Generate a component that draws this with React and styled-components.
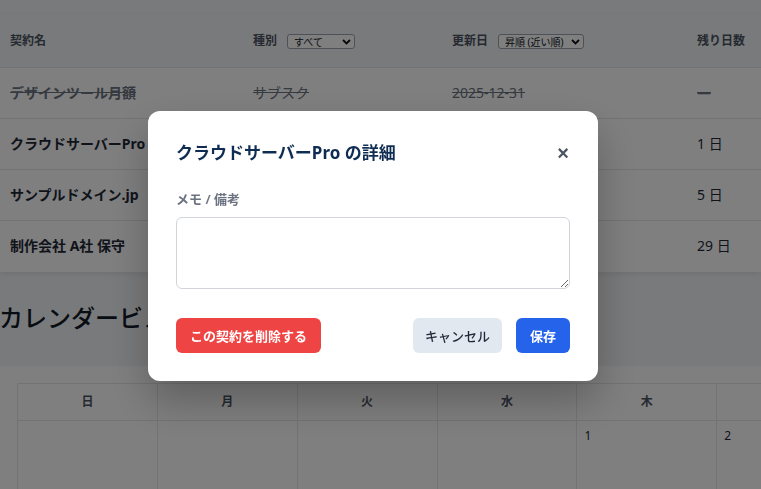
import styled, { createGlobalStyle } from "styled-components";

const GlobalStyle = createGlobalStyle`
  html, body {
    margin: 0;
    padding: 0;
    background: #f3f4f6;
    overflow: hidden;
    font-family: "Noto Sans", "Noto Sans CJK JP", sans-serif;
    color: #1f2937;
  }
`;

const contracts = [
  { name: "デザインツール月額", type: "サブスク", date: "2025-12-31", left: "—", done: true },
  { name: "クラウドサーバーPro", type: "サーバー", date: "2026-01-02", left: "1 日" },
  { name: "サンプルドメイン.jp", type: "ドメイン", date: "2026-01-06", left: "5 日" },
  { name: "制作会社 A社 保守", type: "保守契約", date: "2026-01-30", left: "29 日" },
];

const weekDays = ["日", "月", "火", "水", "木", "金", "土"];
const firstWeek = ["", "", "", "", "1", "2", "3"];

const Page = styled.div`
  padding-top: 15px;
  width: 1000px;
`;

const TableCard = styled.div`
  width: 761px;
  background: #fff;
  box-shadow: 0 2px 6px rgba(0, 0, 0, 0.08);
`;

const Table = styled.table`
  width: 100%;
  border-collapse: collapse;
  table-layout: fixed;
`;

const Th = styled.th`
  width: ${(p) => p.w || "auto"};
  height: 52px;
  padding: 0 10px;
  background: #f3f4f6;
  text-align: left;
  font-size: 12px;
  font-weight: 600;
  color: #4b5563;
  line-height: 16px;
  white-space: nowrap;
`;

const HeadLabel = styled.span`
  margin-right: 10px;
`;

const Select = styled.span`
  display: inline-flex;
  align-items: center;
  justify-content: space-between;
  box-sizing: border-box;
  width: ${(p) => p.w};
  height: 15px;
  padding: 0 3px 0 6px;
  border: 1px solid #9ca3af;
  border-radius: 3px;
  background: #fff;
  font-size: 10px;
  font-weight: 400;
  color: #111827;
  vertical-align: middle;
`;

const Chevron = () => (
  <svg width="9" height="6" viewBox="0 0 9 6">
    <path d="M1 1l3.5 3.5L8 1" fill="none" stroke="#111" strokeWidth="1.8" />
  </svg>
);

const Tr = styled.tr`
  height: 51px;
  border-top: 1px solid #e5e7eb;
  color: ${(p) => (p.done ? "#6b7280" : "#1f2937")};
  text-decoration: ${(p) => (p.done ? "line-through" : "none")};
`;

const Td = styled.td`
  padding: 0 10px;
  font-size: 14px;
  line-height: 20px;
  font-weight: ${(p) => (p.bold ? 700 : 400)};
  white-space: nowrap;
`;

const Heading = styled.h2`
  margin: 30px 0 32px -1px;
  font-size: 24px;
  line-height: 32px;
  font-weight: 500;
  color: #111827;
`;

const CalendarCard = styled.div`
  background: #fff;
  padding: 17px;
`;

const Calendar = styled.table`
  width: 980px;
  border-collapse: collapse;
  table-layout: fixed;
`;

const CalHead = styled.th`
  height: 36px;
  padding: 0;
  border: 1px solid #e5e7eb;
  font-size: 12px;
  line-height: 16px;
  font-weight: 600;
  color: #4b5563;
`;

const CalCell = styled.td`
  height: 100px;
  border: 1px solid #e5e7eb;
  vertical-align: top;
  padding: 7px 7px;
  font-size: 12px;
  line-height: 16px;
  color: #1f2937;
`;

const Overlay = styled.div`
  position: fixed;
  inset: 0;
  background: rgba(0, 0, 0, 0.5);
  display: flex;
  align-items: center;
  justify-content: center;
  padding: 3px 15px 0 0;
`;

const Modal = styled.div`
  width: 450px;
  box-sizing: border-box;
  padding: 28px;
  background: #fff;
  border-radius: 12px;
  box-shadow: 0 20px 40px rgba(0, 0, 0, 0.25);
`;

const ModalHeader = styled.div`
  display: flex;
  align-items: center;
  justify-content: space-between;
`;

const Title = styled.h3`
  margin: 0;
  font-size: 17px;
  line-height: 28px;
  font-weight: 700;
  color: #0f2d52;
`;

const Close = styled.span`
  font-family: "Liberation Sans", sans-serif;
  font-size: 20px;
  font-weight: 700;
  color: #4b5563;
  line-height: 28px;
  margin-right: 1px;
`;

const Label = styled.label`
  display: block;
  margin: 23px 0 9px;
  font-size: 13px;
  line-height: 18px;
  font-weight: 600;
  color: #6b7280;
`;

const TextArea = styled.textarea`
  display: block;
  box-sizing: border-box;
  width: 100%;
  height: 72px;
  border: 1px solid #d1d5db;
  border-radius: 6px;
  outline: none;
`;

const Actions = styled.div`
  display: flex;
  align-items: center;
  margin-top: 29px;
  gap: 14px;
`;

const Spacer = styled.div`
  flex: 1;
`;

const Button = styled.button`
  height: 35px;
  padding: 0 ${(p) => (p.kind === "cancel" ? "12px" : "14px")};
  border: none;
  border-radius: 6px;
  font-family: "Noto Sans", "Noto Sans CJK JP", sans-serif;
  font-size: 13px;
  font-weight: ${(p) => (p.kind === "cancel" ? 500 : 700)};
  background: ${(p) =>
    p.kind === "danger" ? "#ef4444" : p.kind === "cancel" ? "#e2e8f0" : "#2563eb"};
  color: ${(p) => (p.kind === "cancel" ? "#1f2937" : "#fff")};
`;

export default function App() {
  return (
    <>
      <GlobalStyle />
      <Page>
        <TableCard>
          <Table>
            <thead>
              <tr>
                <Th w="223px">契約名</Th>
                <Th w="179px">
                  <HeadLabel>種別</HeadLabel>
                  <Select w="68px">
                    すべて <Chevron />
                  </Select>
                </Th>
                <Th w="225px">
                  <HeadLabel>更新日</HeadLabel>
                  <Select w="86px">
                    昇順 (近い順) <Chevron />
                  </Select>
                </Th>
                <Th>残り日数</Th>
              </tr>
            </thead>
            <tbody>
              {contracts.map((c) => (
                <Tr key={c.name} done={c.done}>
                  <Td bold>{c.name}</Td>
                  <Td>{c.type}</Td>
                  <Td>{c.date}</Td>
                  <Td>{c.left}</Td>
                </Tr>
              ))}
            </tbody>
          </Table>
        </TableCard>

        <Heading>カレンダービュー</Heading>

        <CalendarCard>
          <Calendar>
            <thead>
              <tr>
                {weekDays.map((d) => (
                  <CalHead key={d}>{d}</CalHead>
                ))}
              </tr>
            </thead>
            <tbody>
              <tr>
                {firstWeek.map((d, i) => (
                  <CalCell key={i}>{d}</CalCell>
                ))}
              </tr>
            </tbody>
          </Calendar>
        </CalendarCard>
      </Page>

      <Overlay>
        <Modal>
          <ModalHeader>
            <Title>クラウドサーバーPro の詳細</Title>
            <Close>×</Close>
          </ModalHeader>
          <Label>メモ / 備考</Label>
          <TextArea />
          <Actions>
            <Button kind="danger">この契約を削除する</Button>
            <Spacer />
            <Button kind="cancel">キャンセル</Button>
            <Button kind="save">保存</Button>
          </Actions>
        </Modal>
      </Overlay>
    </>
  );
}
